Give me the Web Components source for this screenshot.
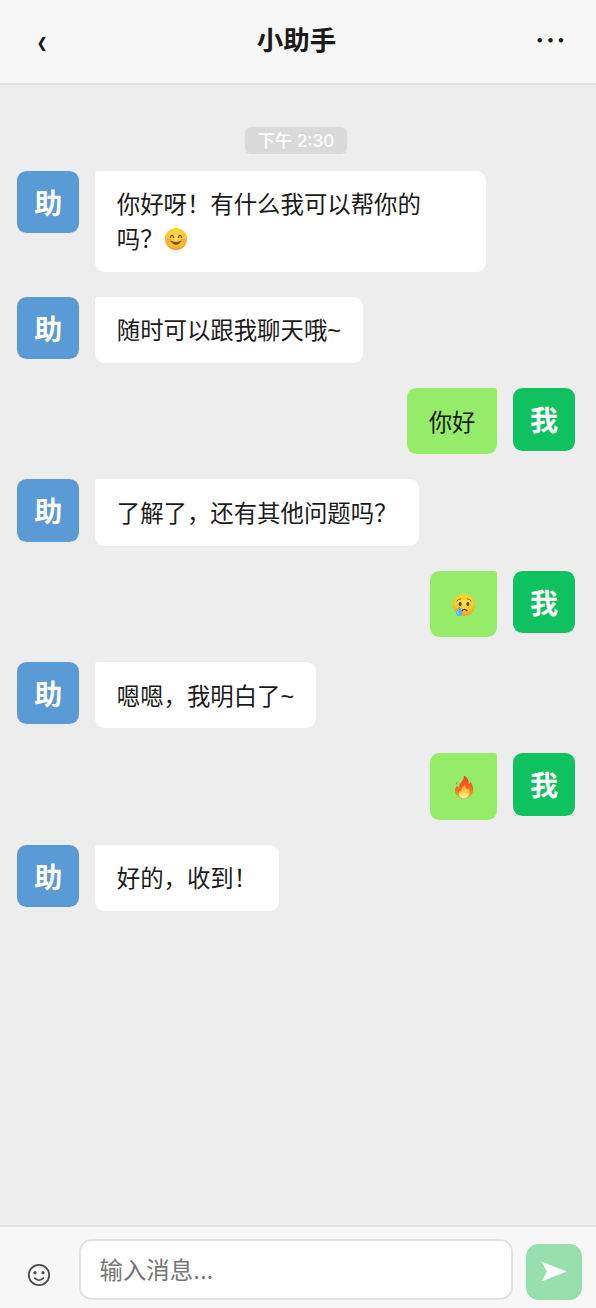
<!DOCTYPE html>
<html lang="zh-CN">
<head>
<meta charset="utf-8">
<title>小助手</title>
<style>
html, body {
	height: 100%;
	margin: 0;
}
body {
	font-family: Inter, "Noto Sans CJK SC", sans-serif;
	color: #1a1a1a;
	background: #ededed;
	overflow: hidden;
}
</style>
</head>
<body>
<chat-app>
	<chat-header slot="header">小助手</chat-header>
	<chat-time>下午 2:30</chat-time>
	<chat-message avatar="助">你好呀！有什么我可以帮你的吗？<chat-emoji name="smile"></chat-emoji></chat-message>
	<chat-message avatar="助">随时可以跟我聊天哦~</chat-message>
	<chat-message avatar="我" self>你好</chat-message>
	<chat-message avatar="助">了解了，还有其他问题吗？</chat-message>
	<chat-message avatar="我" self><chat-emoji name="cry"></chat-emoji></chat-message>
	<chat-message avatar="助">嗯嗯，我明白了~</chat-message>
	<chat-message avatar="我" self><chat-emoji name="fire"></chat-emoji></chat-message>
	<chat-message avatar="助">好的，收到！</chat-message>
	<chat-input slot="footer" placeholder="输入消息..."></chat-input>
</chat-app>

<script>
class ChatApp extends HTMLElement {

	constructor() {
		super();
		this.root = this.attachShadow({mode: 'open'});
		this.root.innerHTML = `
		<style>
		:host {
			display: flex;
			flex-direction: column;
			height: 100vh;
		}
		main {
			flex: 1;
			min-height: 0;
			box-sizing: border-box;
			display: flex;
			flex-direction: column;
			gap: 25px;
			padding: 42px 20.8px 0 17px;
		}
		</style>
		<slot name="header"></slot>
		<main><slot></slot></main>
		<slot name="footer"></slot>
		`;
	}
}
customElements.define('chat-app', ChatApp);

class ChatHeader extends HTMLElement {

	constructor() {
		super();
		this.root = this.attachShadow({mode: 'open'});
		this.root.innerHTML = `
		<style>
		:host {
			display: grid;
			grid-template-columns: 50px 1fr 50px;
			align-items: center;
			box-sizing: border-box;
			height: 85px;
			padding: 0 20px 4px 17px;
			background: #f7f7f7;
			border-bottom: 2px solid #e2e2e2;
			user-select: none;
		}
		h1 {
			margin: 0;
			font-size: 26.5px;
			line-height: 40px;
			font-weight: 600;
			text-align: center;
		}
		button {
			padding: 0;
			border: 0;
			background: none;
			color: inherit;
			font: 500 31px/40px Inter, sans-serif;
		}
		.back {
			padding-top: 6px;
			font-size: 27px;
			font-weight: 700;
			transform: scale(.76, 1.12);
		}
		.more {
			letter-spacing: 1.3px;
		}
		</style>
		<button class="back">‹</button>
		<h1><slot></slot></h1>
		<button class="more">···</button>
		`;
	}
}
customElements.define('chat-header', ChatHeader);

class ChatTime extends HTMLElement {

	constructor() {
		super();
		this.root = this.attachShadow({mode: 'open'});
		this.root.innerHTML = `
		<style>
		:host {
			display: flex;
			justify-content: center;
			margin: 0 0 -8px 0;
		}
		span {
			padding: 1px 12.5px 0;
			border-radius: 6px;
			background: #dadada;
			color: #fff;
			font-size: 17.2px;
			font-weight: 500;
			line-height: 25.5px;
		}
		</style>
		<span><slot></slot></span>
		`;
	}
}
customElements.define('chat-time', ChatTime);

class ChatMessage extends HTMLElement {

	constructor() {
		super();
		this.root = this.attachShadow({mode: 'open'});
		this.root.innerHTML = `
		<style>
		:host {
			display: flex;
			align-items: flex-start;
			gap: 15.6px;
		}
		:host([self]) {
			flex-direction: row-reverse;
		}
		.avatar {
			flex: none;
			box-sizing: border-box;
			width: 62.4px;
			height: 62.4px;
			padding-top: 2px;
			border-radius: 9.4px;
			background: #5b9bd5;
			color: #fff;
			font-size: 28px;
			font-weight: 700;
			line-height: 62px;
			text-align: center;
		}
		.bubble {
			box-sizing: border-box;
			max-width: 391px;
			padding: 17.6px 21.8px 13.6px;
			border-radius: 3px 9.4px 9.4px 9.4px;
			background: #fff;
			font-family: "Liberation Sans", "Noto Sans CJK SC", sans-serif;
			font-size: 23.4px;
			line-height: 35.1px;
			word-break: break-word;
		}
		:host([self]) .avatar {
			background: #10c160;
		}
		:host([self]) .bubble {
			border-radius: 9.4px 3px 9.4px 9.4px;
			background: #95ec69;
		}
		</style>
		<div class="avatar"></div>
		<div class="bubble"><slot></slot></div>
		`;
	}

	static get observedAttributes() {
		return ['avatar'];
	}

	attributeChangedCallback(attrName, oldVal, newVal) {
		if (attrName === 'avatar') {
			this.root.querySelector('.avatar').textContent = newVal;
		}
	}
}
customElements.define('chat-message', ChatMessage);

const EMOJI = {
	smile: `
		<circle cx="12" cy="12" r="11" fill="url(#face)"/>
		<ellipse cx="5" cy="13.5" rx="2.6" ry="2" fill="#ff8a3c" opacity=".5"/>
		<ellipse cx="19" cy="13.5" rx="2.6" ry="2" fill="#ff8a3c" opacity=".5"/>
		<path d="M6.4 10.6Q8 5.6 9.6 10.6M14.4 10.6Q16 5.6 17.6 10.6" fill="none" stroke="#70400b" stroke-width="1.3" stroke-linecap="round"/>
		<path d="M6.8 14.2Q12 21 17.2 14.2Q12 17 6.8 14.2Z" fill="#70400b" stroke="#70400b" stroke-width=".7" stroke-linejoin="round"/>`,
	cry: `
		<circle cx="12" cy="12" r="11" fill="url(#face)"/>
		<path d="M4.6 8.2Q6 5.8 8.8 5.7M15.2 5.7Q18 5.8 19.4 8.2" fill="none" stroke="#8a5a17" stroke-width="1" stroke-linecap="round"/>
		<ellipse cx="8.1" cy="11" rx="1.5" ry="2" fill="#62370b"/>
		<ellipse cx="15.9" cy="11" rx="1.5" ry="2" fill="#62370b"/>
		<path d="M10 17.8Q12.3 15 15 17.8" fill="none" stroke="#62370b" stroke-width="1.4" stroke-linecap="round"/>
		<path d="M7.3 13.5Q11 18.4 10 21Q9.2 23 7 23Q3.8 22.8 4 19.8Q4.4 17 7.3 13.5Z" fill="#4db5f5"/>
		<path d="M6 18Q5 20.5 6.8 21.3" fill="none" stroke="#b9e5ff" stroke-width="1"/>`,
	fire: `
		<path d="M11.8.5C17 3 16.7 6.6 16.7 9Q18.2 8.6 18.2 6.5C22 11 22 16 19.4 20Q17 23.7 12 23.7Q6.8 23.7 4.2 19.7C2 16 3 12.7 5.1 10.8Q5.6 12.3 6.7 12.8C6.5 8.2 12.5 6 11.8.5Z" fill="url(#flame)"/>
		<path d="M5.1 6.8Q3.6 7.6 4 9.2Q5.9 8.7 5.1 6.8Z" fill="#f4562a"/>
		<path d="M13 9.8Q12.7 13.2 15.4 14.6Q16.5 14 16.5 13C18.8 17 17.6 23.1 12 23.1C6.5 23.1 5.9 17.5 8 15.2Q8.4 16.4 9.5 16.7C8.7 13.8 11 11.8 13 9.8Z" fill="url(#core)"/>`
};

class ChatEmoji extends HTMLElement {

	constructor() {
		super();
		this.root = this.attachShadow({mode: 'open'});
		this.root.innerHTML = `
		<style>
		:host {
			display: inline-flex;
			justify-content: center;
			width: 23.4px;
			height: 24px;
			vertical-align: -3.5px;
		}
		:host([name="smile"]) {
			margin-left: 1px;
			vertical-align: -3px;
		}
		svg {
			flex: none;
			width: 24px;
			height: 24px;
		}
		</style>
		<svg viewBox="0 0 24 24">
			<defs>
				<radialGradient id="face" cx=".5" cy=".35" r=".68">
					<stop offset="0" stop-color="#ffe34c"/>
					<stop offset=".62" stop-color="#ffc928"/>
					<stop offset="1" stop-color="#f0941b"/>
				</radialGradient>
				<linearGradient id="flame" x2="0" y2="1">
					<stop offset="0" stop-color="#f0442a"/>
					<stop offset=".55" stop-color="#fa6424"/>
					<stop offset="1" stop-color="#ffac28"/>
				</linearGradient>
				<linearGradient id="core" x2="0" y2="1">
					<stop offset="0" stop-color="#ff9f2a"/>
					<stop offset=".6" stop-color="#ffdb45"/>
					<stop offset="1" stop-color="#fff8d0"/>
				</linearGradient>
			</defs>
			<g></g>
		</svg>
		`;
	}

	connectedCallback() {
		this.root.querySelector('g').innerHTML = EMOJI[this.getAttribute('name')];
	}
}
customElements.define('chat-emoji', ChatEmoji);

class ChatInput extends HTMLElement {

	constructor() {
		super();
		this.root = this.attachShadow({mode: 'open'});
		this.root.innerHTML = `
		<style>
		:host {
			display: flex;
			align-items: flex-end;
			gap: 12.5px;
			box-sizing: border-box;
			height: 83px;
			padding: 0 14.3px 8px 10.4px;
			background: #f7f7f7;
			border-top: 2px solid #e2e2e2;
		}
		button {
			flex: none;
			display: flex;
			align-items: center;
			justify-content: center;
			box-sizing: border-box;
			width: 56.2px;
			height: 56px;
			padding: 0;
			border: 0;
			background: none;
			color: #4c4c4c;
		}
		.face {
			padding: 5px 0 0 1px;
		}
		.send {
			border-radius: 12.5px;
			background: #98dfae;
			color: #fff;
		}
		input {
			flex: 1;
			min-width: 0;
			box-sizing: border-box;
			height: 61px;
			padding: 2px 18.5px 0;
			border: 2px solid #e2e2e2;
			border-radius: 12.5px;
			outline: 0;
			background: #fff;
			color: inherit;
			font-family: inherit;
			font-size: 23.4px;
		}
		input::placeholder {
			color: #757575;
		}
		</style>
		<button class="face">
			<svg width="24" height="24" viewBox="0 0 24 24">
				<circle cx="12" cy="12" r="10.2" fill="none" stroke="currentColor" stroke-width="1.8"/>
				<circle cx="8" cy="9.7" r="1.6" fill="currentColor"/>
				<circle cx="16" cy="9.7" r="1.6" fill="currentColor"/>
				<path d="M7.2 14.6Q12 20 16.8 14.6" fill="none" stroke="currentColor" stroke-width="1.6"/>
			</svg>
		</button>
		<input type="text">
		<button class="send">
			<svg width="26" height="22" viewBox="0 0 26 22">
				<path d="M0.5 0.5L25.5 10.5L0.5 20.5L6 10.5Z" fill="currentColor"/>
			</svg>
		</button>
		`;
	}

	static get observedAttributes() {
		return ['placeholder'];
	}

	attributeChangedCallback(attrName, oldVal, newVal) {
		if (attrName === 'placeholder') {
			this.root.querySelector('input').placeholder = newVal;
		}
	}
}
customElements.define('chat-input', ChatInput);
</script>
</body>
</html>
